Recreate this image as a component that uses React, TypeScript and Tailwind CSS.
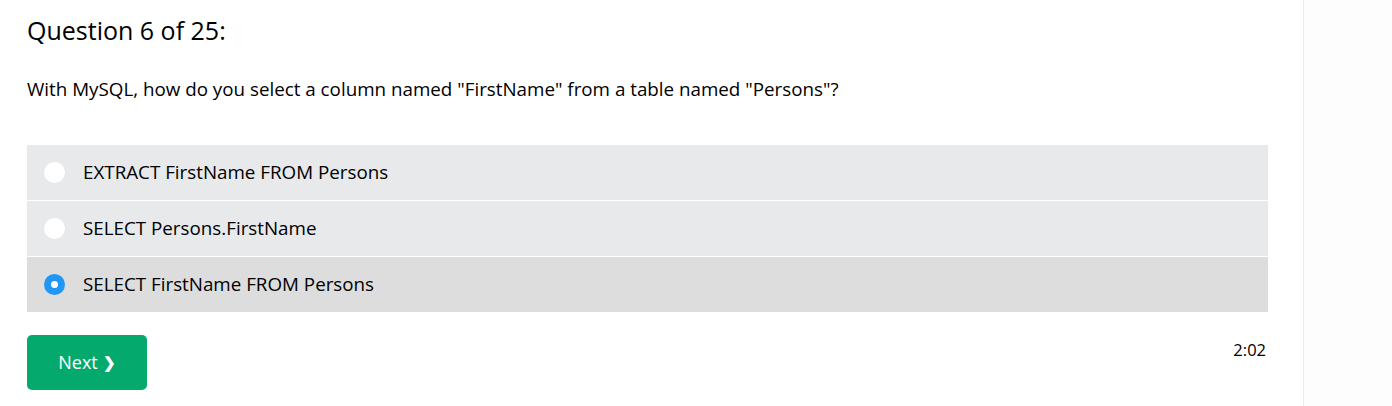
import { useState } from 'react'

const OPTIONS = [
  'EXTRACT FirstName FROM Persons',
  'SELECT Persons.FirstName',
  'SELECT FirstName FROM Persons',
]

export default function App() {
  const [selected, setSelected] = useState(2)

  return (
    <div className="flex min-h-[406px] bg-white text-black" style={{ fontFamily: '"Open Sans", sans-serif' }}>
      <main className="w-[1303px] shrink-0 pl-[27px] pr-[35px]">
        <h2 className="mt-[12px] text-[25px] leading-[36px]">Question 6 of 25:</h2>
        <p className="mt-[27px] text-[18.8px] leading-[28px]">
          With MySQL, how do you select a column named "FirstName" from a table named "Persons"?
        </p>

        <div className="mt-[42px] flex flex-col gap-px">
          {OPTIONS.map((opt, i) => (
            <label
              key={i}
              onClick={() => setSelected(i)}
              className={`flex h-[55px] cursor-pointer items-center ${
                selected === i ? 'bg-[#dddddd]' : 'bg-[#e7e9eb]'
              }`}
            >
              <span
                className={`ml-[17px] mr-[18px] flex h-[21px] w-[21px] items-center justify-center rounded-full ${
                  selected === i ? 'bg-[#2196f3]' : 'bg-white'
                }`}
              >
                {selected === i && <span className="h-[7px] w-[7px] rounded-full bg-white" />}
              </span>
              <span className="text-[18.8px]">{opt}</span>
            </label>
          ))}
        </div>

        <div className="mt-[23px] flex items-start justify-between">
          <button className="flex h-[55px] w-[120px] items-center justify-center rounded-[5px] bg-[#04aa6d] text-[18px] text-white">
            Next <span className="ml-[5px] text-[15px] font-bold">❯</span>
          </button>
          <span className="mt-[3px] mr-[2px] text-[16.5px]">2:02</span>
        </div>
      </main>
      <aside className="flex-1 border-l border-[#ececec] bg-[#fdfdfd]" />
    </div>
  )
}
